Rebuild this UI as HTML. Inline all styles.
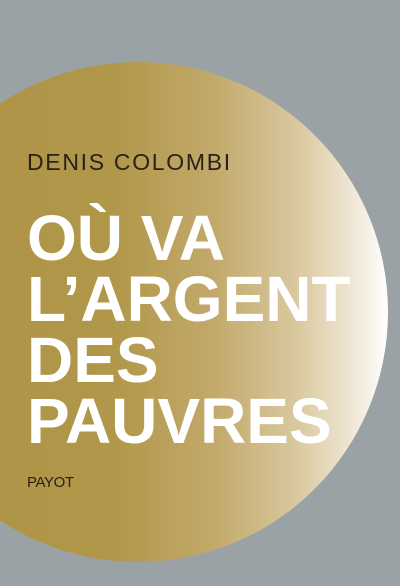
<!DOCTYPE html>
<html><head><style>
body{margin:0;width:400px;height:586px;overflow:hidden;background:#9aa2a6;position:relative;font-family:"Liberation Sans",sans-serif}
.c{position:absolute;left:-112px;top:62px;width:500px;height:500px;border-radius:50%;
background:linear-gradient(90deg,#ad9246 0%,#b19749 45%,#c2a96a 65%,#dac9a0 82%,#f3ede0 95%,#fff 100%)}
.t{position:absolute;left:27px;white-space:nowrap;line-height:1}
.a{top:151px;font-size:23px;letter-spacing:1.7px;color:#2a2117}
.h{font-size:64px;font-weight:bold;color:#fff}
.p{top:475px;font-size:15px;letter-spacing:-0.4px;color:#2a2117}
</style></head><body>
<div class="c"></div>
<div class="t a">DENIS COLOMBI</div>
<div class="t h" style="top:206px">OÙ VA</div>
<div class="t h" style="top:267px">L’ARGENT</div>
<div class="t h" style="top:328px">DES</div>
<div class="t h" style="top:389px">PAUVRES</div>
<div class="t p">PAYOT</div>
</body></html>
